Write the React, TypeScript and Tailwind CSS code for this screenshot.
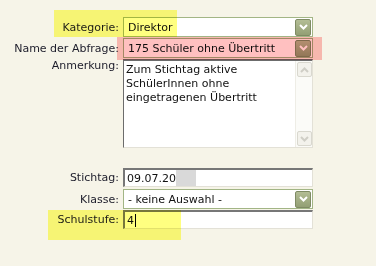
import React from "react";

const font = { fontFamily: '"DejaVu Sans", Verdana, sans-serif' };

function Chevron({ color, up = false }: { color: string; up?: boolean }) {
  return (
    <svg width="9" height="6" viewBox="0 0 9 6" className="block">
      <polyline
        points={up ? "1,5 4.5,1.5 8,5" : "1,1 4.5,4.5 8,1"}
        fill="none"
        stroke={color}
        strokeWidth="2"
      />
    </svg>
  );
}

function DropButton() {
  return (
    <div className="ml-auto mr-px flex h-[17px] w-[16px] items-center justify-center rounded-[2px] border border-[#7f8b64] bg-gradient-to-b from-[#b3bd95] to-[#939f74]">
      <Chevron color="#ffffff" />
    </div>
  );
}

function Select({ value }: { value: string }) {
  return (
    <div className="flex h-[20px] w-[190px] items-center border border-[#a2b585] bg-white">
      <span className="pl-[4px] text-[11px] leading-none text-[#111]">{value}</span>
      <DropButton />
    </div>
  );
}

function ScrollBtn({ up }: { up?: boolean }) {
  return (
    <div className="flex h-[15px] w-[15px] items-center justify-center rounded-[2px] border border-[#d9d8cf] bg-[#f3f2ec]">
      <Chevron color="#cfcec6" up={up} />
    </div>
  );
}

function Row({
  label,
  children,
  top = false,
}: {
  label: string;
  children: React.ReactNode;
  top?: boolean;
}) {
  return (
    <div className={`flex gap-[4px] ${top ? "items-start" : "items-center"}`}>
      <div className="w-[119px] text-right text-[11px] leading-[13px] text-[#1c1c2a]">{label}</div>
      {children}
    </div>
  );
}

export default function App() {
  return (
    <div className="relative h-[266px] w-[376px] overflow-hidden bg-[#f6f4e8]" style={font}>
      <div className="flex flex-col pt-[17px]">
        <Row label="Kategorie:">
          <Select value="Direktor" />
        </Row>
        <div className="mt-[1px]">
          <Row label="Name der Abfrage:">
            <Select value="175 Schüler ohne Übertritt" />
          </Row>
        </div>
        <div className="mt-[1px]">
          <Row label="Anmerkung:" top>
            <div className="flex h-[89px] w-[190px] border-l border-t-2 border-[#6c6c6c] border-b-[#e3e1d7] border-r-[#e3e1d7] border-b border-r bg-white">
              <div className="flex-1 pl-[2px] pt-[2px] text-[11px] leading-[14px] text-[#111]">
                Zum Stichtag aktive
                <br />
                SchülerInnen ohne
                <br />
                eingetragenen Übertritt
              </div>
              <div className="flex w-[17px] flex-col items-center justify-between border-l border-[#eeede6] bg-[#fbfbf8] py-[1px]">
                <ScrollBtn up />
                <ScrollBtn />
              </div>
            </div>
          </Row>
        </div>
        <div className="mt-[20px]">
          <Row label="Stichtag:">
            <div className="flex h-[19px] w-[190px] items-center border-l-2 border-t-2 border-[#777777] border-b border-r border-b-[#e3e1d7] border-r-[#e3e1d7] bg-white">
              <span className="pl-[2px] text-[11px] leading-none text-[#111]">09.07.20</span>
              <span className="h-full w-[20px] bg-[#d9d9d9]" />
            </div>
          </Row>
        </div>
        <div className="mt-[2px]">
          <Row label="Klasse:">
            <Select value="- keine Auswahl -" />
          </Row>
        </div>
        <div className="mt-[1px]">
          <Row label="Schulstufe:">
            <div className="flex h-[19px] w-[190px] items-center border-l-2 border-t-2 border-[#777777] border-b border-r border-b-[#e3e1d7] border-r-[#e3e1d7] bg-white">
              <span className="pl-[2px] text-[11px] leading-none text-[#111]">4</span>
              <span className="ml-[1px] h-[13px] w-px bg-black" />
            </div>
          </Row>
        </div>
      </div>

      <div className="pointer-events-none absolute left-[54px] top-[10px] h-[27px] w-[123px] bg-[#ffff80] mix-blend-multiply" />
      <div className="pointer-events-none absolute left-[117px] top-[37px] h-[23px] w-[205px] bg-[#ffc0c0] mix-blend-multiply" />
      <div className="pointer-events-none absolute left-[48px] top-[210px] h-[30px] w-[133px] bg-[#ffff80] mix-blend-multiply" />
    </div>
  );
}
